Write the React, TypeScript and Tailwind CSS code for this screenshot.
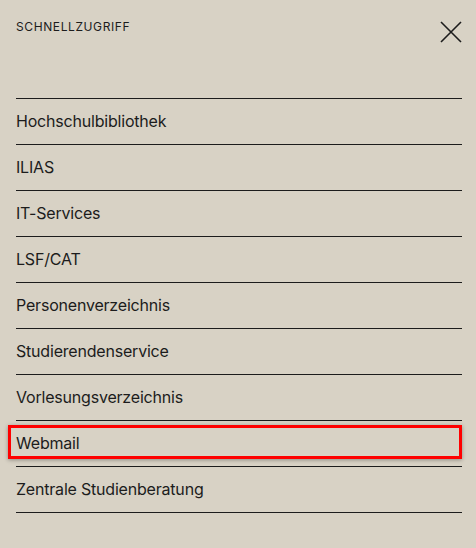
import React from "react";

const items = [
  "Hochschulbibliothek",
  "ILIAS",
  "IT-Services",
  "LSF/CAT",
  "Personenverzeichnis",
  "Studierendenservice",
  "Vorlesungsverzeichnis",
  "Webmail",
  "Zentrale Studienberatung",
];

export default function App() {
  return (
    <div
      className="w-[476px] h-[548px] bg-[#d8d2c5] text-[#1c1c1c] pl-4 pr-[14px] overflow-hidden"
      style={{ fontFamily: "Inter, 'Liberation Sans', sans-serif" }}
    >
      <div className="flex justify-between items-start pt-[20px] h-[98px]">
        <span className="text-[12px] tracking-[0.05em] leading-[14px]">SCHNELLZUGRIFF</span>
        <svg width="24" height="24" viewBox="0 0 24 24" className="-mr-[1px] -mt-[0px]">
          <path d="M2 2 L22 22 M22 2 L2 22" stroke="#1c1c1c" strokeWidth="1.6" fill="none" />
        </svg>
      </div>
      <ul className="border-t border-[#1c1c1c]">
        {items.map((it) => (
          <li key={it} className="relative h-[46px] border-b border-[#1c1c1c] flex items-center pb-[2px] text-[16px] tracking-[-0.2px]">
            {it === "Webmail" && (
              <div className="absolute left-[-8px] right-0 top-[4px] h-[34px] border-[3px] border-[#ff0000] shadow-[0_1px_4px_rgba(0,0,0,0.35)]" />
            )}
            <span className="relative">{it}</span>
          </li>
        ))}
      </ul>
    </div>
  );
}
